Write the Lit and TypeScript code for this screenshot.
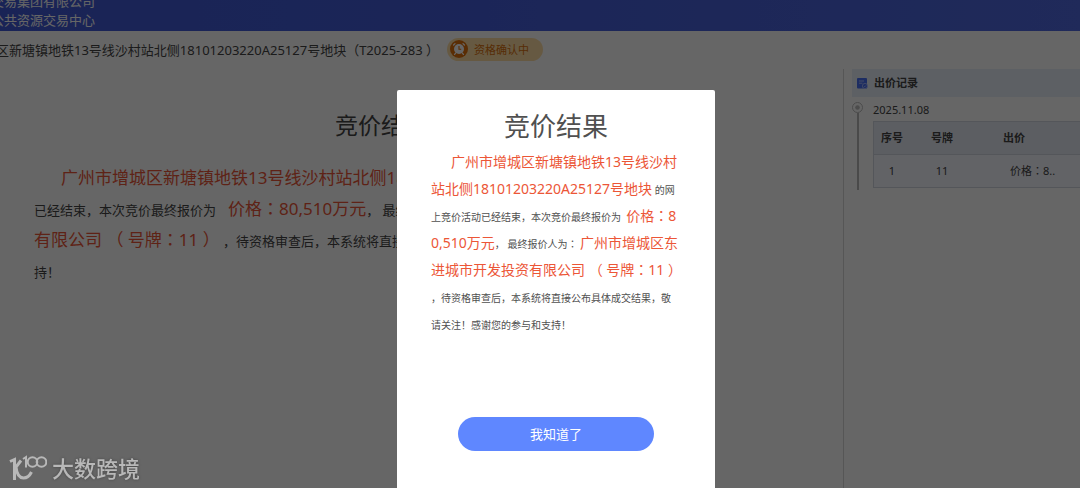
import { LitElement, html, css, svg } from "lit";
import { customElement, property, state } from "lit/decorators.js";

const colon = html`<span class="colon">：</span>`;

@customElement("bid-records")
class BidRecords extends LitElement {
  @property({ attribute: false }) rows: { index: number; plate: string; price: string }[] = [];

  static styles = css`
    :host {
      display: block;
      border-left: 1px solid #d8d8d8;
      padding-left: 8px;
      font-size: 11px;
      color: #444;
    }
    .heading {
      display: flex;
      align-items: center;
      gap: 6px;
      height: 28px;
      padding-left: 5px;
      background: #e9effb;
    }
    h2 {
      margin: 0;
      font-size: 11px;
      font-weight: 700;
      line-height: 16px;
    }
    .timeline {
      display: grid;
      grid-template-columns: 11px 1fr;
      column-gap: 10px;
    }
    .rail {
      display: flex;
      flex-direction: column;
      align-items: center;
      padding-top: 5px;
    }
    .dot {
      display: block;
      flex: none;
    }
    .stem {
      flex: 1;
      width: 2px;
      background: #b8b8b8;
    }
    .entry {
      padding-bottom: 2px;
    }
    time {
      display: block;
      height: 24px;
      line-height: 26px;
    }
    table {
      width: 100%;
      border-collapse: collapse;
      table-layout: fixed;
      border: 1px solid #d3d8e2;
      border-right: 0;
    }
    th,
    td {
      height: 32px;
      padding: 0;
      line-height: 16px;
      text-align: center;
      border-bottom: 1px solid #d3d8e2;
    }
    th {
      background: #e6ebf5;
    }
    td {
      background: #f5f8ff;
    }
    .index {
      width: 36px;
    }
    .plate {
      width: 64px;
    }
    th.price {
      padding-left: 29px;
      text-align: left;
    }
    td.price {
      padding-left: 36px;
      text-align: left;
    }
    .colon {
      font-family: "Noto Sans CJK TC", sans-serif;
      line-height: 1;
    }
  `;

  render() {
    return html`
      <div class="heading">
        <svg width="11" height="11" viewBox="0 0 11 11" aria-hidden="true">
          <rect width="10" height="10.5" rx="1" fill="#4a70f5" />
          <path d="M2 3h5M2 5.2h3.5" stroke="#b9c8ff" stroke-width="0.9" />
          <circle cx="8" cy="8" r="2.6" fill="#4a70f5" stroke="#b9c8ff" stroke-width="0.8" />
          <path d="M7 8l.8.8L9.1 7.4" fill="none" stroke="#b9c8ff" stroke-width="0.7" />
        </svg>
        <h2>出价记录</h2>
      </div>
      <div class="timeline">
        <div class="rail">
          <svg class="dot" width="11" height="11" viewBox="0 0 11 11" aria-hidden="true">
            <circle cx="5.5" cy="5.5" r="5" fill="none" stroke="#bdbdbd" />
            <circle cx="5.5" cy="5.5" r="2.3" fill="#bdbdbd" />
          </svg>
          <div class="stem"></div>
        </div>
        <div class="entry">
          <time datetime="2025-11-08">2025.11.08</time>
          <table>
            <thead>
              <tr>
                <th class="index" scope="col">序号</th>
                <th class="plate" scope="col">号牌</th>
                <th class="price" scope="col">出价</th>
              </tr>
            </thead>
            <tbody>
              ${this.rows.map(
                (row) => html`<tr>
                  <td>${row.index}</td>
                  <td>${row.plate}</td>
                  <td class="price">价格${colon}${row.price}</td>
                </tr>`
              )}
            </tbody>
          </table>
        </div>
      </div>
    `;
  }
}

@customElement("app-root")
class AppRoot extends LitElement {
  @state() private open = true;

  static styles = css`
    :host {
      display: block;
      font-family: "Noto Sans", "Noto Sans CJK SC", sans-serif;
      color: #444;
    }
    .page {
      display: flex;
      flex-direction: column;
      height: 100vh;
      overflow: hidden;
      background: #fff;
    }
    .banner {
      display: flex;
      flex-direction: column;
      justify-content: flex-end;
      align-items: flex-start;
      flex: none;
      height: 30px;
      padding-bottom: 1px;
      background: linear-gradient(90deg, #4059d6, #455edb 45%, #5069e0);
      color: #fff;
      font-size: 13px;
      line-height: 19px;
    }
    .org {
      display: flex;
      justify-content: flex-end;
      width: 95px;
      white-space: nowrap;
    }
    .lot {
      display: flex;
      align-items: center;
      flex: none;
      gap: 8px;
      height: 36px;
      margin-bottom: 2px;
    }
    h1 {
      display: flex;
      justify-content: flex-end;
      width: 439px;
      margin: 0;
      font-size: 13px;
      font-weight: 400;
      white-space: nowrap;
    }
    .status {
      display: flex;
      align-items: center;
      gap: 6px;
      height: 23px;
      padding: 0 14px 0 3px;
      border-radius: 12px;
      background: #ffdfa6;
      color: #d9700c;
      font-size: 11px;
    }
    .columns {
      display: grid;
      grid-template-columns: minmax(0, 1fr) 237px;
      flex: 1;
    }
    .outcome {
      padding: 39px 115px 0 34px;
    }
    h2 {
      margin: 0;
      font-weight: 400;
      text-align: center;
    }
    .outcome h2 {
      font-size: 23px;
      line-height: 34px;
    }
    p {
      margin: 0;
    }
    .line {
      display: block;
      white-space: nowrap;
    }
    .outcome p {
      margin-top: 22px;
      font-size: 13px;
      line-height: 31px;
    }
    .outcome .hot {
      font-size: 17px;
    }
    .hot,
    .colon {
      line-height: 1;
    }
    .hot {
      color: #ec5637;
    }
    .indent {
      padding-left: 27px;
    }
    .colon {
      font-family: "Noto Sans CJK TC", sans-serif;
    }
    .lead {
      margin-left: 12px;
    }
    .overlay {
      position: fixed;
      inset: 0;
      display: flex;
      justify-content: center;
      padding: 90px 0 0 32px;
      background: rgba(0, 0, 0, 0.6);
    }
    .modal {
      position: static;
      display: flex;
      flex-direction: column;
      box-sizing: border-box;
      width: 318px;
      height: 420px;
      margin: 0;
      padding: 18px 34px 0;
      border: 0;
      border-radius: 2px;
      background: #fff;
      color: #505050;
    }
    .modal h2 {
      font-size: 26px;
      line-height: 36px;
    }
    .modal p {
      margin-top: 6px;
      font-size: 10px;
      line-height: 27px;
    }
    .modal .hot {
      font-size: 14px;
    }
    .modal .indent {
      padding-left: 20px;
    }
    button {
      align-self: center;
      width: 196px;
      height: 34px;
      margin-top: 78px;
      padding: 0 0 2px;
      border: 0;
      border-radius: 17px;
      background: #5f87ff;
      color: #fff;
      font: inherit;
      font-size: 13px;
    }
    .mark {
      position: fixed;
      left: 9px;
      bottom: 5px;
      display: flex;
      align-items: center;
      gap: 5px;
      color: #b8b8b8;
      font-size: 22px;
      line-height: 30px;
      font-weight: 500;
      text-shadow: 0 0 3px rgba(0, 0, 0, 0.35);
    }
  `;

  private close() {
    this.open = false;
  }

  private clock() {
    return svg`<svg width="18" height="18" viewBox="0 0 18 18" aria-hidden="true">
      <circle cx="9" cy="9" r="9" fill="#e0710c" />
      <path d="M5 3.6L3.6 5M13 3.6L14.4 5M5.6 13.2l-1 1.2M12.4 13.2l1 1.2" stroke="#fff" stroke-width="1.3" stroke-linecap="round" />
      <circle cx="9" cy="9" r="5" fill="#fff" />
      <path d="M9 6v3.2h2.2" fill="none" stroke="#e0710c" stroke-width="1.1" />
    </svg>`;
  }

  render() {
    return html`
      <div class="page">
        <header class="banner">
          <div class="org">广州交易集团有限公司</div>
          <div class="org">广州公共资源交易中心</div>
        </header>
        <div class="lot">
          <h1>广州市增城区新塘镇地铁13号线沙村站北侧18101203220A25127号地块（T2025-283 ）</h1>
          <div class="status">${this.clock()}<span>资格确认中</span></div>
        </div>
        <div class="columns">
          <main class="outcome">
            <h2>竞价结果</h2>
            <p>
              <span class="line indent"><span class="hot">广州市增城区新塘镇地铁13号线沙村站北侧18101203220A25127号地块</span> 的网上竞价活动</span>
              <span class="line">已经结束，本次竞价最终报价为<span class="hot lead">价格${colon}80,510万元</span>， 最终报价人为${colon} <span class="hot">广州市增城区东进城市开发投资</span></span>
              <span class="line"><span class="hot">有限公司 （ 号牌${colon}11 ）</span> ，待资格审查后，本系统将直接公布具体成交结果，敬请关注！感谢您的参与和支</span>
              <span class="line">持！</span>
            </p>
          </main>
          <bid-records .rows=${[{ index: 1, plate: "11", price: "8.." }]}></bid-records>
        </div>
      </div>
      ${this.open
        ? html`<div class="overlay">
            <dialog class="modal" open aria-labelledby="result-title">
              <h2 id="result-title">竞价结果</h2>
              <p>
                <span class="line indent"><span class="hot">广州市增城区新塘镇地铁13号线沙村</span></span>
                <span class="line"><span class="hot">站北侧18101203220A25127号地块</span> 的网</span>
                <span class="line">上竞价活动已经结束，本次竞价最终报价为&nbsp; <span class="hot">价格${colon}8</span></span>
                <span class="line"><span class="hot">0,510万元</span>， 最终报价人为${colon} <span class="hot">广州市增城区东</span></span>
                <span class="line"><span class="hot">进城市开发投资有限公司 （ 号牌${colon}11 ）</span></span>
                <span class="line">，待资格审查后，本系统将直接公布具体成交结果，敬</span>
                <span class="line">请关注！感谢您的参与和支持！</span>
              </p>
              <button type="button" @click=${this.close}>我知道了</button>
            </dialog>
          </div>`
        : null}
      <div class="mark">
        <svg width="38" height="26" viewBox="0 0 38 26" fill="none" stroke="currentColor" aria-hidden="true">
          <path d="M1 6.500L5.500 4.500V25" stroke-width="3" />
          <path d="M12 5.500L7 12Q8 22.500 14.500 23Q19.500 23 22.500 17" stroke-width="3" />
          <path d="M14 4L17 2V12.500" stroke-width="2" />
          <circle cx="23.500" cy="7" r="4.800" stroke-width="2" />
          <circle cx="32.500" cy="7" r="4.800" stroke-width="2" />
        </svg>
        <span>大数跨境</span>
      </div>
    `;
  }
}
